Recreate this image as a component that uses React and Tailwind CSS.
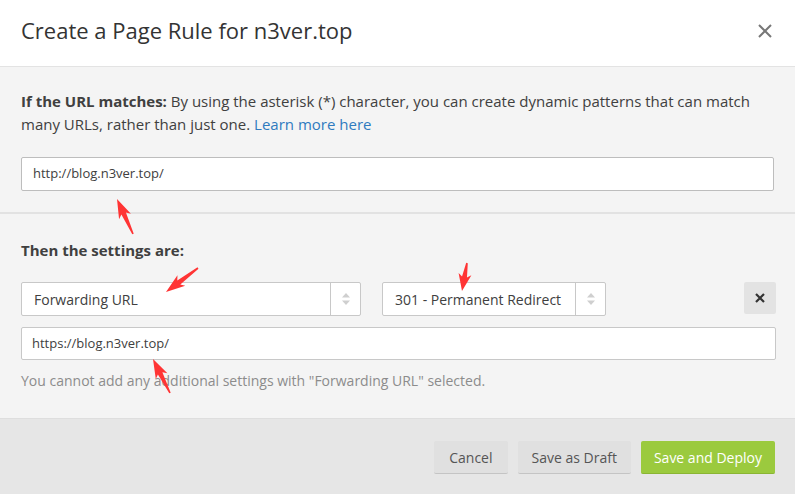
import React from "react";

function Arrow({ x1, y1, x2, y2 }) {
  // tail (x1,y1) -> tip (x2,y2)
  const dx = x2 - x1;
  const dy = y2 - y1;
  const len = Math.hypot(dx, dy);
  const ux = dx / len;
  const uy = dy / len;
  const nx = -uy;
  const ny = ux;
  const hl = Math.min(16, len * 0.5);
  const pts = [
    [x1 + nx * 0.8, y1 + ny * 0.8],
    [x2 - ux * hl + nx * 2.5, y2 - uy * hl + ny * 2.5],
    [x2 - ux * hl * 1.2 + nx * 6.5, y2 - uy * hl * 1.2 + ny * 6.5],
    [x2, y2],
    [x2 - ux * hl * 1.2 - nx * 6.5, y2 - uy * hl * 1.2 - ny * 6.5],
    [x2 - ux * hl - nx * 2.5, y2 - uy * hl - ny * 2.5],
    [x1 - nx * 0.8, y1 - ny * 0.8],
  ];
  return <polygon points={pts.map((p) => p.join(",")).join(" ")} fill="#ff3434" />;
}

function Chevrons() {
  return (
    <svg width="8" height="12" viewBox="0 0 8 12">
      <path d="M4 0 L8 4.5 H0 Z" fill="#cfcfcf" />
      <path d="M4 12 L8 7.5 H0 Z" fill="#cfcfcf" />
    </svg>
  );
}

function Select({ value, width }) {
  return (
    <div className={`flex h-[34px] ${width} bg-white border border-[#c8c8c8] rounded-[2px]`}>
      <div className="flex-1 flex items-center pl-[12px] text-[14px] text-[#404040]">{value}</div>
      <div className="w-[30px] border-l border-[#c8c8c8] flex items-center justify-center">
        <Chevrons />
      </div>
    </div>
  );
}

export default function App() {
  return (
    <div className="relative w-[795px] h-[495px] bg-white overflow-hidden font-['Open_Sans',sans-serif] text-[#333]">
      {/* Header */}
      <div className="h-[67px] flex items-center justify-between pl-[21px] pr-[22px] pb-[6px] border-b border-[#e3e3e3]">
        <h1 className="text-[22px] text-[#333] font-normal">Create a Page Rule for n3ver.top</h1>
        <svg width="16" height="16" viewBox="0 0 16 16" className="mt-[1px]">
          <path d="M2 2 L14 14 M14 2 L2 14" stroke="#777" strokeWidth="2" />
        </svg>
      </div>

      {/* URL match */}
      <div className="bg-[#f4f4f4] px-[21px] pt-[23px] pb-[21px] border-b-2 border-[#e2e2e2]">
        <p className="text-[15px] leading-[23px] text-[#404040]">
          <span className="font-bold">If the URL matches:</span> By using the asterisk (*) character, you can create
          dynamic patterns that can match many URLs, rather than just one.{" "}
          <span className="text-[#2f7bbf]">Learn more here</span>
        </p>
        <div className="mt-[21px] h-[34px] bg-white border border-[#bdbdbd] rounded-[2px] flex items-center pl-[11px] text-[13px] text-[#404040]">
          http://blog.n3ver.top/
        </div>
      </div>

      {/* Settings */}
      <div className="bg-[#f4f4f4] px-[19px] pt-[25px] pb-[26px]">
        <p className="px-[2px] text-[15px] leading-[23px] font-bold text-[#404040]">Then the settings are:</p>
        <div className="mt-[20px] flex items-start pl-[2px]">
          <Select value="Forwarding URL" width="w-[340px]" />
          <div className="ml-[21px]">
            <Select value="301 - Permanent Redirect" width="w-[224px]" />
          </div>
          <div className="ml-auto w-[32px] h-[32px] bg-[#e3e3e3] rounded-[2px] flex items-center justify-center">
            <svg width="10" height="10" viewBox="0 0 10 10">
              <path d="M1 1 L9 9 M9 1 L1 9" stroke="#333" strokeWidth="2.2" />
            </svg>
          </div>
        </div>
        <div className="mt-[11px] ml-[2px] h-[33px] bg-white border border-[#c8c8c8] rounded-[2px] flex items-center pl-[10px] text-[13px] text-[#404040]">
          https://blog.n3ver.top/
        </div>
        <p className="mt-[9px] px-[2px] text-[14px] leading-[23px] text-[#8c8c8c]">
          You cannot add any additional settings with "Forwarding URL" selected.
        </p>
      </div>

      {/* Footer */}
      <div className="h-[76px] bg-[#e6e6e6] border-t border-[#dedede] flex justify-end items-start pt-[22px] pr-[20px] gap-[10px]">
        <button className="h-[33px] px-[15px] bg-[#e0e0e0] border-b border-[#c4c4c4] rounded-[2px] text-[14px] text-[#555]">
          Cancel
        </button>
        <button className="h-[33px] px-[14px] bg-[#e0e0e0] border-b border-[#c4c4c4] rounded-[2px] text-[14px] text-[#555]">
          Save as Draft
        </button>
        <button className="h-[33px] px-[13px] bg-[#9bca3e] border-b border-[#8ab533] rounded-[2px] text-[14px] text-white">
          Save and Deploy
        </button>
      </div>

      {/* Annotations */}
      <svg className="absolute inset-0 pointer-events-none" width="795" height="495">
        <Arrow x1={133} y1={234} x2={117} y2={199} />
        <Arrow x1={198} y1={268} x2={166} y2={292} />
        <Arrow x1={467} y1={263} x2={462} y2={291} />
        <Arrow x1={170} y1={393} x2={153} y2={359} />
      </svg>
    </div>
  );
}
